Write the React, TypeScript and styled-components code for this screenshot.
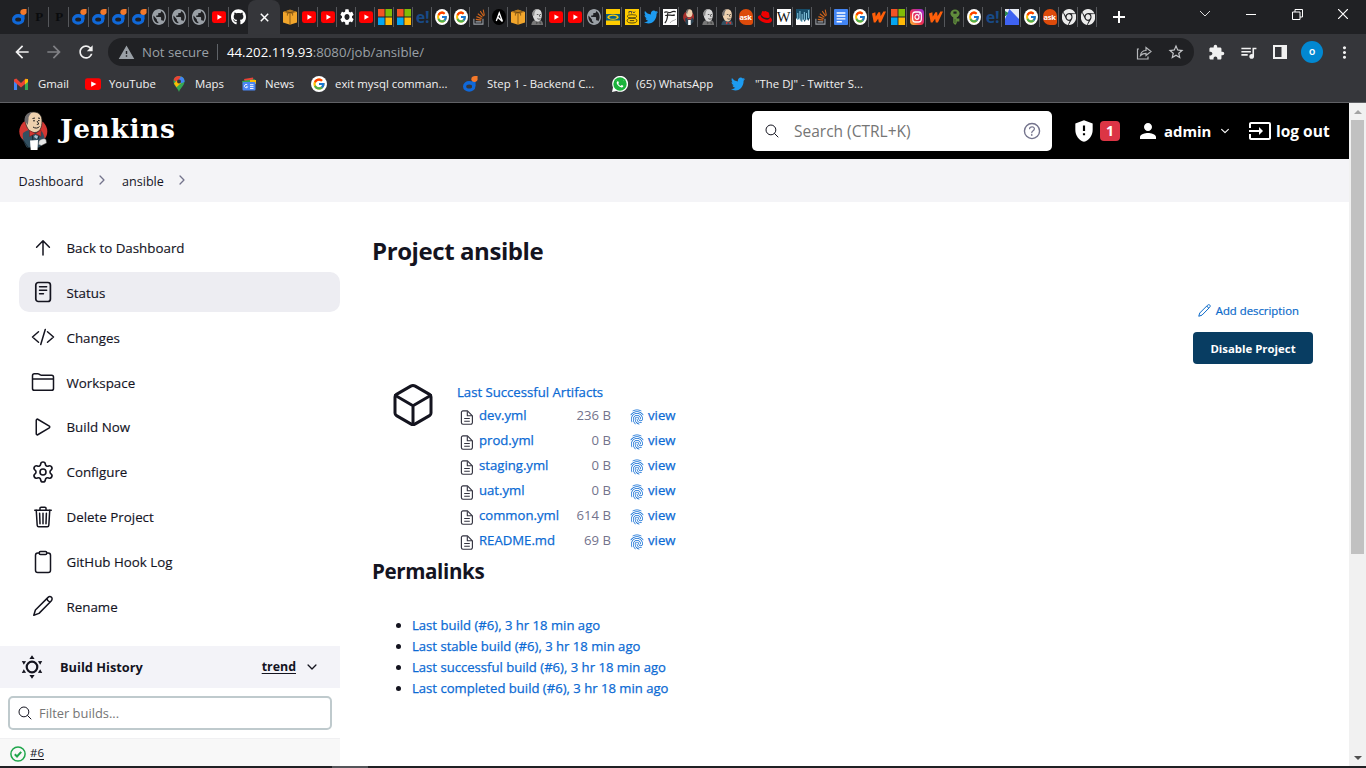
import React from "react";
import styled, { createGlobalStyle } from "styled-components";
import {
  IoCodeSlashOutline, IoFolderOutline, IoPlayOutline, IoTrashOutline,
  IoClipboardOutline, IoSearchOutline, IoHelpCircleOutline, IoCubeOutline,
  IoFingerPrintOutline, IoChevronForward, IoChevronDown,
} from "react-icons/io5";
import { MdPerson, MdInput, MdGppMaybe, MdStarBorder, MdExtension, MdQueueMusic, MdRefresh, MdArrowBack, MdArrowForward, MdWarning, MdSettings, MdMoreVert, MdPublic } from "react-icons/md";
import { FaGithub, FaTwitter, FaRedhat, FaWhatsapp, FaChrome } from "react-icons/fa";
import { FcGoogle } from "react-icons/fc";
import { Settings } from "lucide-react";

const Global = createGlobalStyle`
  *, *::before, *::after { box-sizing: border-box; }
  body { margin: 0; overflow: hidden; font-family: "Open Sans", "Noto Sans", sans-serif; }
  svg { display: block; flex: none; }
  a { text-decoration: none; color: inherit; }
`;

/* ---------- favicons ---------- */

const Fav = ({ children, w = 14, h = 16 }: { children: React.ReactNode; w?: number; h?: number }) => (
  <svg width={w} height={h} viewBox="0 0 16 16" preserveAspectRatio="none">{children}</svg>
);
const DIcon = () => (
  <Fav w={15}>
    <ellipse cx="6.6" cy="10.4" rx="4.9" ry="3.7" fill="none" stroke="#1068d8" strokeWidth="3.4" />
    <path d="M9.6 4.6h3.8v5.4l-3.8 3z" fill="#1068d8" />
    <path d="M8.900 3.200C8.900.500 11 0 15.500 0v3.200c0 3.600-6.600 3.700-6.600 0z" fill="#f5792a" />
  </Fav>
);
const Globe = () => <MdPublic size={16} viewBox="2 2 20 20" color="#9aa0a6" preserveAspectRatio="none" style={{ width: 14 }} />;
const YouTube = ({ w = 14 }: { w?: number }) => (
  <Fav w={w}><rect y="2.200" width="16" height="11.800" rx="2.400" fill="#f00" /><path d="m6.200 5.400 5.200 2.700-5.200 2.700z" fill="#fff" /></Fav>
);
const Aws = () => (
  <Fav>
    <path d="M0 3 8 1l8 2v10.500L8 15.800 0 13.500z" fill="#f2a62c" />
    <path d="M0 3l8 1.800L16 3 8 .6z" fill="#b87a1e" /><path d="M3 2.600l8 1.600v2.400M13 2.600 5 4.200v2.400M8 4.800v11" stroke="#6d470f" strokeWidth=".8" fill="none" />
  </Fav>
);
const Microsoft = () => (
  <Fav><path d="M0 0h7.500v7.500H0z" fill="#f35325" /><path d="M8.500 0H16v7.500H8.500z" fill="#81bc06" /><path d="M0 8.500h7.500V16H0z" fill="#05a6f0" /><path d="M8.500 8.500H16V16H8.500z" fill="#ffba08" /></Fav>
);
const Google = ({ w = 14 }: { w?: number }) => (
  <Fav w={w}><ellipse cx="8" cy="8" rx="8" ry="8" fill="#fff" /><g transform="translate(1.300 1.300)"><FcGoogle size={13.4} /></g></Fav>
);
const Overflow = () => (
  <Fav>
    <path d="M1 9.800v5.400h10.400V9.800M3 12.900h6.400" fill="none" stroke="#9aa0a6" strokeWidth="1.200" />
    <path d="m3.200 10.400 6.300.8M3.900 7.600l6 2M5.500 4.700l5.300 3.500M8.300 2.200l3.900 5M11.700.6l1.300 6" fill="none" stroke="#d0651c" strokeWidth="1.200" />
  </Fav>
);
const Ansible = () => (
  <Fav><circle cx="8" cy="8" r="8" fill="#000" /><path d="m4.900 12 3.400-8 3.600 8.300-5.400-4.200" fill="none" stroke="#fff" strokeWidth="1.500" /></Fav>
);
const Butler = ({ gray }: { gray?: boolean }) => (
  <Fav>
    <path d="M1.500 16c.2-3.200 2-4.700 5-5l5.600.3c2 .8 2.600 2.500 2.900 4.700z" fill={gray ? "#777" : "#335061"} />
    <path d="M3 6C2.500 2 5 .2 8.500.3c3.600 0 5.300 2.700 5 6.200-.2 3.300-1.700 6-5 6-3 0-4.800-3-5.500-6.500z" fill={gray ? "#d8d8d8" : "#edd0ae"} />
    <path d="M3 6.500C1.600 3.600 4 .7 7.600.2 5.600 1.700 4.900 4 4.900 6.800z" fill={gray ? "#909090" : "#6d6b6d"} />
    <path d="M7.800 5.500h1.800M11 5.500h1.500M8.400 9.600c1.200.7 2.500.7 3.600 0M10.600 6l.9 2" stroke="#333" strokeWidth=".8" fill="none" />
    <path d="m9.500 13.800-2.700-1.300v3zm0 0 3.200-1.300v3z" fill={gray ? "#555" : "#d33833"} />
  </Fav>
);
const Mtn = ({ ring }: { ring?: boolean }) => (
  <Fav>
    <rect width="16" height="16" fill="#fc0" />
    {ring ? (
      <><path d="M4.500 4.500v-2h3v2M9 2.500 10.200 4l1.300-1.500" stroke="#444" fill="none" /><ellipse cx="8" cy="7.300" rx="5.600" ry="1.600" fill="none" stroke="#443c10" strokeWidth=".9" /><ellipse cx="8" cy="11.600" rx="5.600" ry="2.400" fill="none" stroke="#443c10" /><path d="M5.500 11.600h5" stroke="#443c10" /></>
    ) : (
      <><path d="M0 5h16v6.500H0z" fill="#0d5f86" /><ellipse cx="8" cy="8.200" rx="6.300" ry="2.600" fill="#fc0" /><ellipse cx="8" cy="8.200" rx="4.200" ry="1.500" fill="#0d5f86" /></>
    )}
  </Fav>
);
const Twitter = () => <FaTwitter size={16} color="#1d9bf0" preserveAspectRatio="none" style={{ width: 14 }} />;
const Sketch = () => (
  <Fav><rect width="16" height="16" fill="#fff" /><path d="M1.500 3.500c3-2 4.500 1 7 0s4.500-1.500 6-.600M2.500 6.500c4-1.200 7 .6 11-.5M5.500 4C5 9 5 12 2 14" fill="none" stroke="#222" strokeWidth="1.300" /><path d="M8 14c2-3 5-2 7-4" fill="none" stroke="#aaa" /></Fav>
);
const JenkinsSmall = () => (
  <Fav>
    <ellipse cx="7.500" cy="8" rx="6.300" ry="6" fill="#a52f2b" /><path d="M4 14 3.500 9.500 7 8l5.500 1 .8 3.500L10 16H6z" fill="#2c4352" />
    <ellipse cx="8.300" cy="4.300" rx="3.600" ry="4" fill="#edd0ae" /><path d="M4.600 4C4.700 1 6.500 0 8.500 0 7 1 6 3 6 5z" fill="#6d6b6d" /><path d="M7 11h3v5H7z" fill="#fff" /><path d="M6.200 8.500h4.600v1.800H6.200z" fill="#d33833" />
  </Fav>
);
const FavLabel = styled.span<{ $bg?: string; $fg: string; $size: number; $round?: boolean; $serif?: boolean; $weight?: number }>`
  display: flex;
  justify-content: center;
  width: 14px;
  height: 16px;
  border-radius: ${(p) => (p.$round ? "7px 7px 3px 7px" : "0")};
  background: ${(p) => p.$bg ?? "transparent"};
  color: ${(p) => p.$fg};
  font: ${(p) => p.$weight ?? 700} ${(p) => p.$size}px/16px ${(p) => (p.$serif ? '"Liberation Serif", serif' : '"Open Sans", sans-serif')};
  letter-spacing: -0.3px;
`;
const Wave = () => (
  <Fav><rect width="16" height="16" fill="#fff" /><path d="M0 0h16v9l-2 3-2-3-2 4-2-3-2 3-2-4-2 2-2-2z" fill="#174d69" /><path d="M2 4v7M4.500 2v9M7 5v8M9.500 3v8M12 4v7M14.500 1v8" stroke="#8fd0e8" strokeWidth="1" /></Fav>
);
const Docs = () => <Fav><rect width="16" height="16" rx="1" fill="#4285f4" /><path d="M3 4h10M3 7h10M3 9.900h10M3 12.800h6" stroke="#fff" strokeWidth="1.400" /></Fav>;
const Zigzag = () => (
  <Fav><path d="m0 4.500 3.800-1.300.5 4.300 3-4.300h2l.6 4.100L13 2.500h3L10.200 13.500H7.800L7 9.800l-3 3.800H2z" fill="#ff5f0a" /></Fav>
);
const Insta = () => (
  <Fav>
    <defs><linearGradient id="ig" x1="0" y1="1" x2=".9" y2="0"><stop offset="0" stopColor="#fdc830" /><stop offset=".45" stopColor="#f0304c" /><stop offset="1" stopColor="#9a2bd0" /></linearGradient></defs>
    <rect width="16" height="16" rx="4" fill="url(#ig)" /><rect x="3" y="3" width="10" height="10" rx="3" fill="none" stroke="#fff" strokeWidth="1.300" /><circle cx="8" cy="8" r="2.300" fill="none" stroke="#fff" strokeWidth="1.300" /><circle cx="11" cy="5" r=".8" fill="#fff" />
  </Fav>
);
const KeyIcon = () => <Fav><ellipse cx="8" cy="4.500" rx="5.200" ry="4" fill="#608c3c" /><path d="M6 8h4v6L8.300 16 6 14zM9.500 9.500H13v3H9.500z" fill="#608c3c" /><path d="M6.500 2.800h3v1.600h-3zM8 10v4" fill="#202124" stroke="#202124" strokeWidth=".5" /></Fav>;
const BlueSail = () => <Fav><rect width="16" height="16" fill="#3f63f2" /><path d="M5 0h11v10z" fill="#e8ecf5" /><path d="M0 0h5L0 10z" fill="#e8ecf5" /><path d="M0 2l4 2-3 3H0z" fill="#2a8a54" /></Fav>;
const Chrome = () => <FaChrome size={16} color="#ececec" viewBox="8 8 480 496" preserveAspectRatio="none" style={{ width: 14 }} />;
const fav = (k: string) => {
  switch (k) {
    case "d": return <DIcon />;
    case "P": return <FavLabel $fg="#0b0c0e" $size={13} $serif>P</FavLabel>;
    case "o": return <Globe />;
    case "y": return <YouTube />;
    case "h": return <FaGithub color="#fff" style={{ width: 15, height: 16 }} preserveAspectRatio="none" />;
    case "a": return <Aws />;
    case "c": return <MdSettings size={16} color="#fff" preserveAspectRatio="none" viewBox="2 2 20 20" style={{ width: 14 }} />;
    case "m": return <Microsoft />;
    case "e": return <FavLabel $fg="#184a87" $size={16}>e!</FavLabel>;
    case "g": return <Google />;
    case "s": return <Overflow />;
    case "A": return <Ansible />;
    case "j": return <Butler gray />;
    case "J": return <Butler />;
    case "b": return <JenkinsSmall />;
    case "n": return <Mtn />;
    case "N": return <Mtn ring />;
    case "t": return <Twitter />;
    case "k": return <Sketch />;
    case "q": return <FavLabel $bg="#dd4b0b" $fg="#fff" $size={7.500} $round>ask</FavLabel>;
    case "r": return <FaRedhat color="#e00" size={16} preserveAspectRatio="none" style={{ width: 14 }} />;
    case "W": return <FavLabel $bg="#fff" $fg="#111" $size={14.500} $weight={400} $serif>W</FavLabel>;
    case "w": return <Wave />;
    case "D": return <Docs />;
    case "z": return <Zigzag />;
    case "i": return <Insta />;
    case "K": return <KeyIcon />;
    case "B": return <BlueSail />;
    default: return <Chrome />;
  }
};

/* ---------- browser frame ---------- */

const Window = styled.div`
  width: 1366px;
  height: 768px;
  display: flex;
  flex-direction: column;
  overflow: hidden;
  background: #fff;
`;
const TabStrip = styled.div`
  height: 34px;
  flex: none;
  display: flex;
  background: #202124;
  padding-left: 9px;
`;
const Tab = styled.div<{ $w: number; $last?: boolean }>`
  width: ${(p) => p.$w}px;
  height: 34px;
  flex: none;
  display: flex;
  align-items: center;
  justify-content: center;
  background: ${(p) => (p.$last ? "none" : "linear-gradient(#55575b, #55575b) right 7px / 1px 20px no-repeat")};
`;
const ActiveTab = styled.div`
  width: 32px;
  height: 34px;
  flex: none;
  display: grid;
  place-items: center;
  background: #35363a;
  border-radius: 8px 8px 0 0;
`;
const NewTab = styled.div`
  width: 44px;
  display: grid;
  place-items: center;
`;
const WindowControls = styled.div`
  margin-left: auto;
  display: grid;
  grid-template-columns: repeat(4, 46px);
  height: 28px;
  place-items: center;
`;
const Toolbar = styled.div`
  height: 36px;
  flex: none;
  display: flex;
  align-items: center;
  background: #35363a;
  padding-left: 12px;
`;
const NavButtons = styled.div`
  display: grid;
  grid-template-columns: 32px 32px 32px;
  svg { width: 20px; height: 20px; }
`;
const AddressBar = styled.div`
  width: 1086px;
  height: 28px;
  border-radius: 14px;
  background: #202124;
  display: flex;
  align-items: center;
  padding: 0 9px 0 10px;
  color: #9aa0a6;
  font-size: 13.2px;
`;
const NotSecure = styled.span`
  padding: 0 7px 0 7px;
  border-right: 1px solid #5f6368;
  line-height: 16px;
  margin-right: 9px;
  width: 83px;
  white-space: nowrap;
`;
const Url = styled.span`
  flex: 1;
  b { font-weight: 400; color: #fff; }
`;
const BarActions = styled.div`
  display: flex;
  gap: 14px;
  align-items: center;
`;
const Extensions = styled.div`
  display: grid;
  grid-template-columns: repeat(5, 32px);
  margin-left: 6px;
  place-items: center;
`;
const Avatar = styled.div`
  width: 22px;
  height: 22px;
  border-radius: 50%;
  background: #0288d1;
  color: #fff;
  font: 500 11px/21px Roboto, sans-serif;
  text-align: center;
`;
const Bookmarks = styled.div`
  height: 33px;
  flex: none;
  display: grid;
  grid-template-columns: 71px 86px 70px 70px 152px 149px 119px 200px;
  padding: 0 0 4px 14px;
  background: #35363a;
  border-bottom: 1px solid #606165;
  color: #f1f1f1;
  font-size: 11.4px;
  align-items: center;
  white-space: nowrap;
`;
const Bookmark = styled.div`
  display: grid;
  grid-template-columns: 16px auto;
  column-gap: 8px;
  align-items: center;
  justify-content: start;
  span { padding-bottom: 2px; }
`;

/* ---------- page ---------- */

const Viewport = styled.div`
  height: 663px;
  flex: none;
  display: flex;
`;
const Page = styled.div`
  width: 1349px;
  display: flex;
  flex-direction: column;
  color: #14141f;
`;
const Scrollbar = styled.div`
  width: 17px;
  display: flex;
  flex-direction: column;
  align-items: center;
  background: #f1f1f1;
  padding: 7px 0 6px;
`;
const Arrow = styled.i<{ $down?: boolean }>`
  border: 4px solid transparent;
  border-top: ${(p) => (p.$down ? "4px solid #505050" : "0")};
  border-bottom: ${(p) => (p.$down ? "0" : "4px solid #a3a3a3")};
  margin-top: ${(p) => (p.$down ? "auto" : "0")};
`;
const Thumb = styled.div`
  width: 13px;
  height: 434px;
  margin-top: 6px;
  background: #c1c1c1;
`;
const Header = styled.header`
  height: 56px;
  flex: none;
  display: flex;
  align-items: center;
  background: #000;
  color: #fff;
  padding-left: 18px;
`;
const Brand = styled.span`
  font: 700 26.500px/40px "DejaVu Serif", serif;
  margin: -4px 0 0 12px;
  letter-spacing: 0.600px;
`;
const SearchBox = styled.div`
  margin-left: auto;
  width: 300px;
  height: 40px;
  border-radius: 5px;
  background: #fff;
  display: flex;
  align-items: center;
  padding: 0 9px 0 12px;
  color: #73738c;
  font-size: 15.5px;
  span { flex: 1; margin-left: 14px; color: #757575; }
`;
const HeaderItem = styled.div<{ $w: number }>`
  width: ${(p) => p.$w}px;
  display: flex;
  align-items: center;
  font-weight: 700;
  font-size: 14.900px;
  white-space: nowrap;
`;
const Alert = styled.span`
  width: 20px;
  height: 20px;
  border-radius: 4px;
  background: #dc3545;
  text-align: center;
  line-height: 20px;
  font-size: 14px;
  margin-left: 3px;
`;
const HeaderText = styled.span<{ $size?: number }>`
  margin: 0 8px 0 4px;
  font-size: ${(p) => p.$size ?? 14.900}px;
`;
const Breadcrumbs = styled.nav`
  height: 43px;
  flex: none;
  display: flex;
  align-items: center;
  background: #f4f4f7;
  padding: 1px 0 0 18.500px;
  font-size: 12.6px;
  svg { margin: -3px 13.500px 0 11px; color: #73738c; }
`;
const Columns = styled.div`
  flex: 1;
  display: flex;
`;
const Sidebar = styled.aside`
  width: 340px;
  flex: none;
  display: flex;
  flex-direction: column;
`;
const Tasks = styled.div`
  padding: 25.500px 0 0 19px;
  height: 444px;
  flex: none;
`;
const Task = styled.a<{ $active?: boolean }>`
  display: flex;
  align-items: center;
  height: 40px;
  margin-bottom: 4.870px;
  border-radius: 10px;
  padding-left: 12px;
  font-size: 13.350px;
  background: ${(p) => (p.$active ? "#ededf2" : "transparent")};
  -webkit-text-stroke: 0.150px #14141f;
  svg { width: 24px; height: 24px; margin-right: 11.500px; }
  span { padding-top: 1px; }
`;
const HistoryHead = styled.div`
  height: 42px;
  flex: none;
  display: flex;
  align-items: center;
  padding: 0 21px 1px 20px;
  background: #f3f3f8;
  font-weight: 700;
  font-size: 12.800px;
  span { flex: 1; margin-left: 16px; }
  a { text-decoration: underline; margin-right: 9px; font-size: 12.400px; text-underline-offset: 2px; }
`;
const Filter = styled.div`
  margin: 8px 8px 8px;
  height: 34px;
  flex: none;
  border: 2px solid #bfcacd;
  border-radius: 5px;
  display: flex;
  align-items: center;
  padding-left: 7px;
  font-size: 12.900px;
  color: #757575;
  svg { color: #14141f; margin-right: 6px; }
`;
const BuildRow = styled.div`
  flex: 1;
  background: #f8f8f8;
  border-top: 1px solid #f0f0f2;
  display: flex;
  align-items: flex-start;
  padding: 7px 0 0 10px;
  font-size: 11.500px;
  a { text-decoration: underline; margin: -2px 0 0 4px; text-underline-offset: 2px; line-height: 18px; }
`;
const Main = styled.main`
  flex: 1;
  padding: 0 36px 0 32px;
  display: flex;
  flex-direction: column;
`;
const Title = styled.h1`
  font-size: 24px;
  font-weight: 700;
  line-height: 36px;
  letter-spacing: -0.420px;
  margin: 31px 0 0;
`;
const Actions = styled.div`
  display: flex;
  flex-direction: column;
  align-items: flex-end;
  margin-top: 31px;
`;
const Describe = styled.a`
  display: flex;
  align-items: center;
  gap: 4px;
  height: 20px;
  color: #0b6aca;
  font-size: 11.350px;
  margin-right: 14px;
  -webkit-text-stroke: 0.200px #0b6aca;
`;
const Disable = styled.button`
  width: 120px;
  height: 32px;
  margin-top: 12px;
  border: 0;
  padding: 0;
  border-radius: 4px;
  background: #083d62;
  color: #fff;
  font: 700 11.400px "Open Sans", sans-serif;
`;
const Artifacts = styled.section`
  display: flex;
  margin-top: 18px;
  padding-left: 17px;
  color: #0b6ad4;
  font-size: 13.150px;
  height: 170px;
  & > svg { color: #14141f; margin-top: -1px; }
`;
const ArtifactList = styled.div`
  margin-left: 20px;
`;
const Link = styled.a`
  color: #0b6ad4;
  -webkit-text-stroke: 0.250px #0b6ad4;
`;
const ListTitle = styled(Link)`
  display: block;
  line-height: 20px;
`;
const FileRow = styled.div`
  display: grid;
  grid-template-columns: 19px 83px 67px 19px auto;
  height: 25px;
  align-items: center;
  padding-left: 3px;
  justify-content: start;
  svg { margin-top: 5px; }
`;
const Size = styled.span`
  color: #73738c;
  text-align: right;
  padding-right: 18px;
`;
const SubTitle = styled.h2`
  font-size: 20.600px;
  font-weight: 700;
  line-height: 30px;
  letter-spacing: -0.400px;
  margin: 4px 0 0;
`;
const Links = styled.ul`
  margin: 29px 0 0;
  padding-left: 40px;
  font-size: 13.100px;
  line-height: 21px;
`;
const BottomEdge = styled.div`
  height: 2px;
  flex: none;
  background: linear-gradient(90deg, #202124 332px, #55565a 332px, #55565a 368px, #202124 368px);
`;

const JenkinsLogo = () => (
  <svg width="30" height="40" viewBox="0 0 30 40">
    <ellipse cx="15.300" cy="20.500" rx="14" ry="13" fill="#d33833" />
    <path d="M5 22c4-3 7-3.500 11-3l8 1.500c2 3 3 7 3 11l-6 5H9c-3-4-5-10-4-14.500z" fill="#335061" />
    <path d="M3 27c4 4 5 7 7 9M14 22l1 8M22 22l-2 6" stroke="#18262f" strokeWidth="1" fill="none" />
    <path d="M7 9C7 3.500 11 .8 16 1c5.500.2 8 4 8 9 0 6.500-2 11.500-7.500 11.500C11 21.500 8 16 7 9z" fill="#edd0ae" stroke="#222" strokeWidth=".7" />
    <path d="M6.700 11C5.800 5 9.500 1.500 14.500 1c-2.500 2-4.500 4.500-4 7.500L9.800 14 8 11.500z" fill="#6d6b6d" />
    <path d="M14.500 7.500 17 7M20 7l2 .4M15 9.800h2M20 9.600h1.600M19 10l1.800 3-2 .5M15 16c2 1.500 5 1.500 6.500-.5" stroke="#222" strokeWidth="1" fill="none" />
    <path d="m17.500 22.500-6-3v6zm0 0 5.500-3.500v6.500z" fill="#d33833" stroke="#7a1b18" strokeWidth=".5" />
    <path d="m12 29.500 8-.5-.5 10h-6.800z" fill="#fff" />
    <path d="M21 30c2-2 5-3 7-1.500l.5 3.500-5 2.500-3-1z" fill="#e6e6e6" stroke="#555" strokeWidth=".5" />
    <path d="m17 24 3 1-1 3-3-2z" fill="#a9c0cf" />
  </svg>
);
const UpIcon = () => (
  <svg viewBox="0 0 24 24" fill="none" stroke="#14141f" strokeWidth="1.500" strokeLinecap="round" strokeLinejoin="round"><path d="M12 19V5M5.600 11.200 12 4.800l6.400 6.400" /></svg>
);
const PencilIcon = ({ size = 24, width = 1.500 }: { size?: number; width?: number }) => (
  <svg width={size} height={size} viewBox="0 0 24 24" fill="none" stroke="currentColor" strokeWidth={width} strokeLinejoin="round">
    <path d="M2.800 21.200 4.400 16 16.800 3.600c1.200-1.200 2.900-1.100 3.700-.3s.9 2.500-.3 3.700L8 19.400z" /><path d="M15.800 4.800c.5 1.700 1.600 2.800 3.300 3.300" />
  </svg>
);
const StatusIcon = () => (
  <svg viewBox="0 0 24 24" fill="none" stroke="#14141f" strokeWidth="1.700" strokeLinecap="round">
    <rect x="4.800" y="2.500" width="14.600" height="19" rx="2.500" /><path d="M8.500 6.800h7.200M8.500 10.300h7.200M8.500 13.800h4" strokeWidth="1.400" />
  </svg>
);
const FileIcon = () => (
  <svg width="14" height="15" viewBox="0 0 14 15" fill="none" stroke="#333340" strokeLinejoin="round">
    <path d="M3 .900h4.500l4.900 4.900v6.800a1.600 1.600 0 0 1-1.600 1.600H3a1.600 1.600 0 0 1-1.600-1.600V2.500A1.600 1.600 0 0 1 3 .900z" strokeWidth="1.150" /><path d="M7.300 1.200v4.500h4.800M4.200 8.500h5.600M4.200 11.200h5.600" strokeWidth="1.100" />
  </svg>
);
const HistoryIcon = () => (
  <svg width="24" height="26" viewBox="0 0 24 26">
    <circle cx="12" cy="13" r="5.300" fill="none" stroke="#14141f" strokeWidth="2.200" />
    <path d="m12 1.300 2.600 3.700H9.400zM12 24.700l2.600-3.700H9.400zM1.800 7l4.300.2-2.300 3.600zM22.200 7l-4.300.2 2.300 3.600zM1.800 19l4.300-.2-2.300-3.600zM22.200 19l-4.300-.2 2.300-3.600z" fill="#14141f" />
  </svg>
);
const SuccessIcon = () => (
  <svg width="16" height="16" viewBox="0 0 16 16" fill="none" stroke="#1ea64b">
    <circle cx="8" cy="8" r="7.100" strokeWidth="1.500" /><path d="m4.800 8.300 2.200 2.200 4.200-4.700" strokeWidth="2" />
  </svg>
);
const Gmail = () => <Fav><path d="M0 14V5h3.500v9z" fill="#4285f4" /><path d="M12.500 5H16v9h-3.500z" fill="#34a853" /><path d="M0 3.400 2.600 2.500 8 7l5.400-4.500 2.600.9v2L8 11.500 0 5.600z" fill="#ea4335" /><path d="m12.500 3.300 3.500-.4v3l-3.500 2.600z" fill="#fbbc04" /></Fav>;
const MapsPin = () => (
  <Fav w={16}><path d="M8 0C4.700 0 2.500 2.400 2.500 5.400c0 3.800 4.300 6.400 5.500 10.600 1.200-4.200 5.500-6.800 5.500-10.600C13.500 2.400 11.300 0 8 0z" fill="#34a853" /><path d="M8 0C5 0 3.200 1.600 2.700 4l3.300 2.500L10.500 1z" fill="#ea4335" /><path d="M10 .4 6 6l3.500 1.500 4-1.500C13.800 3.300 12.400 1 10 .4z" fill="#4285f4" /><path d="m3 7.400 3-3 4 2.600-4.500 4.300z" fill="#fbbc04" /><circle cx="8" cy="5.500" r="2" fill="#35363a" /></Fav>
);
const NewsIcon = () => (
  <Fav w={16}><path d="m3 3 9-1.500 1 5H4z" fill="#ea4335" /><path d="m1 5 13-1.800v6H2z" fill="#34a853" /><path d="M9 4h6v4H9z" fill="#fbbc04" /><rect x="1.500" y="6" width="13" height="8.500" rx="1" fill="#4a86f5" /><path d="M6.300 8.800a1.700 1.700 0 1 0 .4 2H5M9 8.700h3.500M9 10.600h3.500M9 12.500h3.500" stroke="#fff" fill="none" strokeWidth=".9" /></Fav>
);
const WhatsApp = () => (
  <Fav w={16}><path d="M0 16l1-4.500A8 8 0 1 1 4.500 15z" fill="#fff" /><circle cx="8" cy="8" r="6.700" fill="#1bb33c" /><g transform="translate(2.200 2)"><FaWhatsapp size={11.6} color="#fff" viewBox="90 110 268 270" width="8" height="8" style={{ width: 8, height: 8 }} x="1.800" y="2" /></g></Fav>
);

const leftTabs = "dPPddddoooyh".split("");
const rightTabs = "ayycymmeggsAajyyonNtkbjJqrWwsDgzmizKgeBgqxx".split("");
const bookmarks: [React.ReactNode, string][] = [
  [<Gmail />, "Gmail"], [<YouTube w={16} />, "YouTube"], [<MapsPin />, "Maps"], [<NewsIcon />, "News"],
  [<Google w={16} />, "exit mysql comman..."], [<DIcon />, "Step 1 - Backend C..."], [<WhatsApp />, "(65) WhatsApp"], [<Twitter />, "\"The DJ\" - Twitter S..."],
];
const tasks: [React.ReactNode, string][] = [
  [<UpIcon />, "Back to Dashboard"], [<StatusIcon />, "Status"], [<IoCodeSlashOutline />, "Changes"],
  [<IoFolderOutline />, "Workspace"], [<IoPlayOutline />, "Build Now"], [<Settings strokeWidth={1.600} />, "Configure"],
  [<IoTrashOutline />, "Delete Project"], [<IoClipboardOutline />, "GitHub Hook Log"], [<PencilIcon />, "Rename"],
];
const files = [["dev.yml", "236 B"], ["prod.yml", "0 B"], ["staging.yml", "0 B"], ["uat.yml", "0 B"], ["common.yml", "614 B"], ["README.md", "69 B"]];
const permalinks = ["build", "stable build", "successful build", "completed build"];

export default function App() {
  return (
    <Window>
      <Global />
      <TabStrip>
        {leftTabs.map((k, i) => <Tab key={i} $w={i === 11 ? 19 : 20} $last={i === 11}>{fav(k)}</Tab>)}
        <ActiveTab>
          <svg width="9" height="9" viewBox="0 0 9 9"><path d="m.8.8 7.400 7.400M8.200.8.800 8.200" stroke="#fff" strokeWidth="1.500" /></svg>
        </ActiveTab>
        {rightTabs.map((k, i) => <Tab key={i} $w={19}>{fav(k)}</Tab>)}
        <NewTab>
          <svg width="12" height="12" viewBox="0 0 12 12"><path d="M6 0v12M0 6h12" stroke="#fff" strokeWidth="2" /></svg>
        </NewTab>
        <WindowControls>
          <svg width="12" height="8" viewBox="0 0 12 8"><path d="m1 1 5 5 5-5" stroke="#ddd" fill="none" /></svg>
          <svg width="10" height="1"><path d="M0 .5h10" stroke="#fff" /></svg>
          <svg width="11" height="11" viewBox="0 0 11 11"><path d="M.5 3h7.500v7.500H.5zM3 3V.5h7.500V8H8" stroke="#fff" fill="none" /></svg>
          <svg width="10" height="10" viewBox="0 0 10 10"><path d="m0 0 10 10M10 0 0 10" stroke="#fff" strokeWidth="1.200" /></svg>
        </WindowControls>
      </TabStrip>
      <Toolbar>
        <NavButtons><MdArrowBack color="#f1f1f1" /><MdArrowForward color="#808185" /><MdRefresh color="#f1f1f1" /></NavButtons>
        <AddressBar>
          <MdWarning size={17} color="#9aa0a6" />
          <NotSecure>Not secure</NotSecure>
          <Url><b>44.202.119.93</b>:8080/job/ansible/</Url>
          <BarActions>
            <svg width="17" height="15" viewBox="0 0 17 15" fill="none" stroke="#b5b7ba" strokeWidth="1.200"><path d="M3 4H1.500v10H12v-2.500" /><path d="M4.500 10.500c.5-3.300 2.500-5 5.500-5V2.500l5 4-5 4V8.300c-2.500 0-4 .7-5.500 2.200z" /></svg>
            <MdStarBorder size={18} color="#c4c6c9" />
          </BarActions>
        </AddressBar>
        <Extensions>
          <MdExtension size={17} color="#f1f1f1" />
          <MdQueueMusic size={19} color="#f1f1f1" />
          <svg width="14" height="14" viewBox="0 0 14 14"><path d="M0 0h14v14H0z" fill="#f1f1f1" /><path d="M2 2h6.500v10H2z" fill="#35363a" /></svg>
          <Avatar>o</Avatar>
          <MdMoreVert size={19} color="#f1f1f1" />
        </Extensions>
      </Toolbar>
      <Bookmarks>
        {bookmarks.map(([icon, label]) => <Bookmark key={label}>{icon}<span>{label}</span></Bookmark>)}
      </Bookmarks>
      <Viewport>
        <Page>
          <Header>
            <JenkinsLogo />
            <Brand>Jenkins</Brand>
            <SearchBox>
              <IoSearchOutline size={16} color="#14141f" />
              <span>Search (CTRL+K)</span>
              <IoHelpCircleOutline size={22} />
            </SearchBox>
            <HeaderItem $w={84}>
              <MdGppMaybe size={26} style={{ marginLeft: 19 }} /><Alert>1</Alert>
            </HeaderItem>
            <HeaderItem $w={112}>
              <MdPerson size={24} /><HeaderText>admin</HeaderText><IoChevronDown size={12} />
            </HeaderItem>
            <HeaderItem $w={101}>
              <MdInput size={24} /><HeaderText $size={15.500}>log out</HeaderText>
            </HeaderItem>
          </Header>
          <Breadcrumbs>
            Dashboard<IoChevronForward size={14} />ansible<IoChevronForward size={14} />
          </Breadcrumbs>
          <Columns>
            <Sidebar>
              <Tasks>
                {tasks.map(([icon, label]) => <Task key={label} $active={label === "Status"}>{icon}<span>{label}</span></Task>)}
              </Tasks>
              <HistoryHead><HistoryIcon /><span>Build History</span><a>trend</a><IoChevronDown size={14} /></HistoryHead>
              <Filter><IoSearchOutline size={16} />Filter builds...</Filter>
              <BuildRow><SuccessIcon /><a>#6</a></BuildRow>
            </Sidebar>
            <Main>
              <Title>Project ansible</Title>
              <Actions>
                <Describe><PencilIcon size={15} width={1.600} />Add description</Describe>
                <Disable>Disable Project</Disable>
              </Actions>
              <Artifacts>
                <IoCubeOutline size={48} />
                <ArtifactList>
                  <ListTitle>Last Successful Artifacts</ListTitle>
                  {files.map(([name, size]) => (
                    <FileRow key={name}>
                      <FileIcon /><Link>{name}</Link><Size>{size}</Size><IoFingerPrintOutline size={16} /><Link>view</Link>
                    </FileRow>
                  ))}
                </ArtifactList>
              </Artifacts>
              <SubTitle>Permalinks</SubTitle>
              <Links>
                {permalinks.map((p) => <li key={p}><Link>Last {p} (#6), 3 hr 18 min ago</Link></li>)}
              </Links>
            </Main>
          </Columns>
        </Page>
        <Scrollbar><Arrow /><Thumb /><Arrow $down /></Scrollbar>
      </Viewport>
      <BottomEdge />
    </Window>
  );
}
